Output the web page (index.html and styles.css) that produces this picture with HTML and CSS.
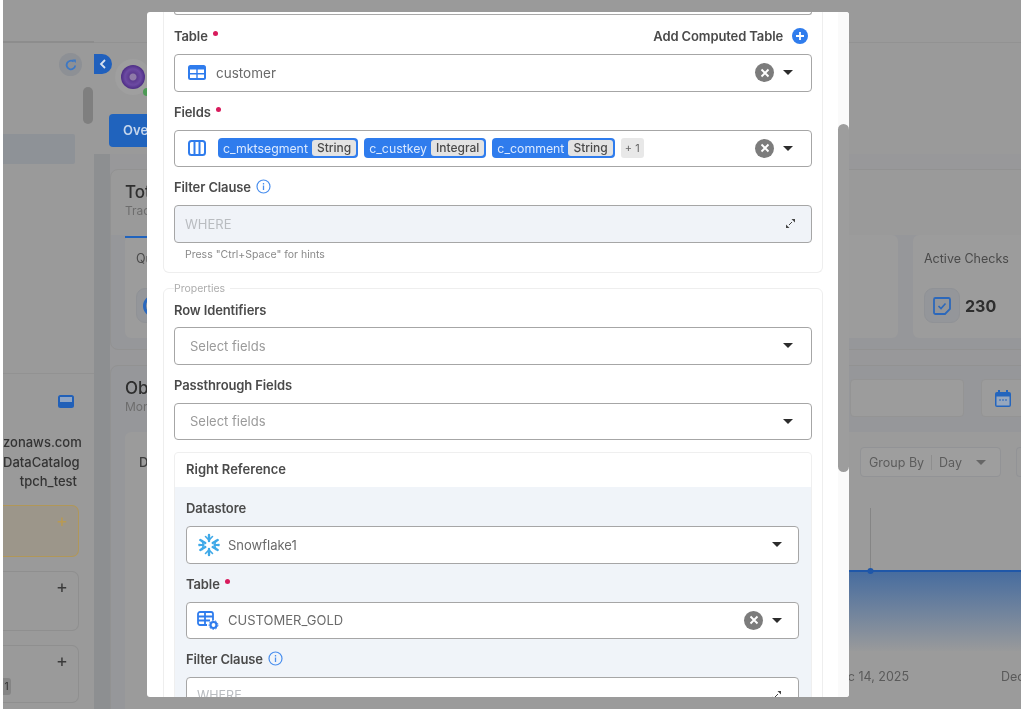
FILE: index.html
```html
<!DOCTYPE html>
<html lang="en">
<head>
<meta charset="utf-8">
<title>Add check</title>
<link rel="stylesheet" href="styles.css">
</head>
<body>
<div class="stage">
  <aside class="side">
    <div class="side-top"></div>
    <div class="side-tools">
      <span class="refresh"><svg width="14" height="14" viewBox="0 0 14 14"><path d="M11.2 7.5A4.3 4.3 0 1 1 9.6 3.6" fill="none" stroke="#3d78c4" stroke-width="1.8"/><path d="M8.2 1.5h3.6v3.6z" fill="#3d78c4"/></svg></span>
    </div>
    <div class="side-scroll"></div>
    <div class="side-sel"></div>
    <div class="side-info">
      <svg class="side-ico" width="16" height="14" viewBox="0 0 16 14"><rect width="16" height="13" rx="2.500" fill="#2160b8"/><rect x="2" y="2" width="12" height="5" fill="#8fa5c4"/></svg>
      <p>zonaws.com</p>
      <p>DataCatalog</p>
      <p>tpch_test</p>
    </div>
    <div class="side-card amber"><span>+</span></div>
    <div class="side-card tall"><span>+</span></div>
    <div class="side-card last"><span>+</span><b>1</b></div>
  </aside>

  <main class="main">
    <button class="collapse"><svg width="8" height="10" viewBox="0 0 8 10"><path d="M6 1L2 5l4 4" fill="none" stroke="#d8e2f0" stroke-width="1.800"/></svg></button>
    <header class="head">
      <div class="head-top"></div>
      <div class="avatar-row"><span class="avatar"><span class="avatar-in"></span><i class="online"></i></span></div>
      <div class="tab-row"><span class="tab-main">Overview</span></div>
    </header>

    <section class="panel totals">
      <h2>Totals</h2>
      <p class="sub">Tracking</p>
      <div class="underline"></div>
      <div class="stats">
        <div class="stat low"><p>Quality</p><span class="stat-ico ring"><i class="ring-in"></i></span></div>
        <div class="stat"></div>
        <div class="stat"></div>
        <div class="stat"></div>
        <div class="stat">
          <p>Active Checks</p>
          <div class="stat-val"><span class="stat-ico"><svg width="20" height="20" viewBox="0 0 20 20"><path d="M3.500 2h13a1.500 1.500 0 0 1 1.500 1.500V13l-5 5H3.500A1.500 1.500 0 0 1 2 16.500v-13A1.500 1.500 0 0 1 3.500 2z" fill="none" stroke="#2c68bb" stroke-width="1.800"/><path d="M6.500 10l2.500 2.500 4.500-5" fill="none" stroke="#2c68bb" stroke-width="1.600"/></svg></span><strong>230</strong></div>
        </div>
      </div>
    </section>

    <section class="panel observe">
      <div class="obs-head">
        <div class="obs-title"><h2>Obs</h2><p class="sub">Monitor</p></div>
        <div class="date-box"></div>
        <div class="cal-box"><svg width="18" height="19" viewBox="0 0 18 19"><rect x="1" y="3" width="16" height="15" rx="2" fill="#2465bd"/><rect x="2.500" y="7.500" width="13" height="9" fill="#97a7bd"/><rect x="4" y="1" width="2" height="4" fill="#2465bd"/><rect x="12" y="1" width="2" height="4" fill="#2465bd"/><path d="M5 11h2M8 11h2M11 11h2" stroke="#2465bd" stroke-width="1.200"/></svg></div>
      </div>
      <div class="chart-card">
        <div class="chart-head">
          <span class="chart-name">Data</span>
          <div class="group-by"><span class="gb-label">Group By</span><span class="gb-val">Day</span><i class="caret muted"></i></div>
          <div class="group-next"></div>
        </div>
        <svg class="chart" width="896" height="160" viewBox="0 0 896 160">
          <defs><linearGradient id="fade" x1="0" y1="0" x2="0" y2="1"><stop offset="0" stop-color="#466c9f"/><stop offset="1" stop-color="#999a9b"/></linearGradient></defs>
          <rect x="100" y="71" width="796" height="80" fill="url(#fade)"/>
          <line x1="745.500" y1="8" x2="745.500" y2="71" stroke="#858585"/>
          <line x1="100" y1="71" x2="896" y2="71" stroke="#1f57a8" stroke-width="2"/>
          <circle cx="745.500" cy="71" r="3" fill="#1f57a8"/>
        </svg>
        <div class="chart-axis"><span>Dec 14, 2025</span><span>Dec</span></div>
      </div>
    </section>
  </main>

  <div class="modal">
    <div class="modal-body">
      <div class="card first">
        <div class="tail"></div>
        <div class="label-row"><label>Table <i class="req"></i></label><span class="add">Add Computed Table <svg width="16" height="16" viewBox="0 0 16 16"><circle cx="8" cy="8" r="8" fill="#2f7ced"/><path d="M8 4v8M4 8h8" stroke="#fff" stroke-width="1.800"/></svg></span></div>
        <div class="field">
          <svg class="f-ico" width="18" height="16" viewBox="0 0 18 16"><rect width="18" height="15" rx="2.500" fill="#2f7ced"/><path d="M2 4.500h6.300v3.500H2zM9.700 4.500H16v3.500H9.700zM2 9.500h6.300V13H2zM9.700 9.500H16V13H9.700z" fill="#fff"/></svg>
          <span class="val">customer</span>
          <span class="clear"><svg width="10" height="10" viewBox="0 0 10 10"><path d="M1.500 1.500l7 7M8.500 1.500l-7 7" stroke="#fff" stroke-width="1.900"/></svg></span><i class="caret"></i>
        </div>
        <label class="lbl-gap">Fields <i class="req"></i></label>
        <div class="field">
          <svg class="f-ico" width="18" height="16" viewBox="0 0 18 16"><rect x="1" y="1" width="16" height="14" rx="2.500" fill="none" stroke="#2f7ced" stroke-width="2"/><path d="M6.500 1v14M11.500 1v14" stroke="#2f7ced" stroke-width="2"/></svg>
          <span class="chips">
            <span class="chip"><span>c_mktsegment</span><b>String</b></span>
            <span class="chip"><span>c_custkey</span><b>Integral</b></span>
            <span class="chip"><span>c_comment</span><b>String</b></span>
            <span class="more">+ 1</span>
          </span>
          <span class="clear"><svg width="10" height="10" viewBox="0 0 10 10"><path d="M1.500 1.500l7 7M8.500 1.500l-7 7" stroke="#fff" stroke-width="1.900"/></svg></span><i class="caret"></i>
        </div>
        <label class="lbl-gap">Filter Clause <svg class="info" width="15" height="15" viewBox="0 0 15 15"><circle cx="7.500" cy="7.500" r="6.500" fill="none" stroke="#4a8fee" stroke-width="1.200"/><path d="M7.500 6.500v4.500M7.500 4v1.500" stroke="#4a8fee" stroke-width="1.300"/></svg></label>
        <div class="field code">
          <span class="ph">WHERE</span>
          <svg width="11" height="11" viewBox="0 0 11 11"><path d="M6.500 1H10v3.500zM4.500 10H1V6.500z" fill="#444"/><path d="M7 4L4 7" stroke="#444"/></svg>
        </div>
        <p class="hint">Press "Ctrl+Space" for hints</p>
      </div>

      <fieldset class="card props">
        <legend>Properties</legend>
        <label class="lbl-top">Row Identifiers</label>
        <div class="field"><span class="sel">Select fields</span><i class="caret"></i></div>
        <label class="lbl-gap">Passthrough Fields</label>
        <div class="field"><span class="sel">Select fields</span><i class="caret"></i></div>
        <div class="ref">
          <h3>Right Reference</h3>
          <div class="ref-body">
            <label>Datastore</label>
            <div class="field">
              <svg class="flake" width="24" height="24" viewBox="0 0 24 24" fill="none" stroke="#3fa9e8" stroke-width="2.400" stroke-linecap="round"><path d="M12 2v6M12 16v6M3.300 7l5 3M15.700 14l5 3M3.300 17l5-3M15.700 10l5-3"/><path d="M8.500 3.500L12 7l3.500-3.500M8.500 20.500L12 17l3.500 3.500M2 11.500l4.500 .5L5 7.500M22 11.500l-4.500 .5L19 7.500M2 12.500l4.500-.5L5 16.500M22 12.500l-4.500-.5L19 16.500" stroke-width="1.600"/></svg>
              <span class="val small">Snowflake1</span>
              <i class="caret"></i>
            </div>
            <label class="lbl-gap">Table <i class="req"></i></label>
            <div class="field">
              <svg class="f-ico" width="22" height="19" viewBox="0 0 22 19"><path d="M10 14H3a2 2 0 0 1-2-2V3a2 2 0 0 1 2-2h11a2 2 0 0 1 2 2v6" fill="none" stroke="#2f7ced" stroke-width="1.800"/><path d="M1 5.500h15M1 9.500h12M8 1v13" stroke="#2f7ced" stroke-width="1.800"/><circle cx="16.500" cy="14" r="3" fill="none" stroke="#2f7ced" stroke-width="2.200"/><circle cx="16.500" cy="14" r="4.400" fill="none" stroke="#2f7ced" stroke-width="1" stroke-dasharray="1.600 1.500"/></svg>
              <span class="val small">CUSTOMER_GOLD</span>
              <span class="clear"><svg width="10" height="10" viewBox="0 0 10 10"><path d="M1.500 1.500l7 7M8.500 1.500l-7 7" stroke="#fff" stroke-width="1.900"/></svg></span><i class="caret"></i>
            </div>
            <label class="lbl-gap">Filter Clause <svg class="info" width="15" height="15" viewBox="0 0 15 15"><circle cx="7.500" cy="7.500" r="6.500" fill="none" stroke="#4a8fee" stroke-width="1.200"/><path d="M7.500 6.500v4.500M7.500 4v1.500" stroke="#4a8fee" stroke-width="1.300"/></svg></label>
            <div class="field last-field">
              <span class="ph">WHERE</span>
              <svg width="11" height="11" viewBox="0 0 11 11"><path d="M6.500 1H10v3.500zM4.500 10H1V6.500z" fill="#444"/><path d="M7 4L4 7" stroke="#444"/></svg>
            </div>
          </div>
        </div>
      </fieldset>
    </div>
    <div class="modal-scroll"><div class="modal-thumb"></div></div>
  </div>
</div>
</body>
</html>
```

FILE: styles.css
```css
* { box-sizing: border-box; }
html, body { margin: 0; height: 100%; background: #fff; overflow: hidden; }
body { font-family: Inter, "Liberation Sans", sans-serif; color: #3c3c3c; }
p, h2, h3 { margin: 0; }

.stage {
  position: relative;
  width: 1018px;
  height: 709px;
  margin-left: 3px;
  display: flex;
  overflow: hidden;
  background: #9a9a9a;
  filter: blur(0.6px);
}

/* sidebar */
.side { width: 91px; flex: none; background: #9a9a9a; }
.side-top { height: 43px; border-bottom: 2px solid #8d8d8d; }
.side-tools { display: flex; justify-content: flex-end; padding: 10px 12px 0 0; }
.refresh { width: 23px; height: 23px; border-radius: 50%; background: #8d9095; display: flex; align-items: center; justify-content: center; }
.side-scroll { width: 10px; height: 37px; margin: 11px 0 0 80px; border-radius: 5px; background: #7f7f7f; }
.side-sel { width: 72px; height: 30px; margin-top: 10px; background: #8e9297; border-radius: 0 2px 2px 0; }
.side-info { margin-top: 209px; border-top: 1px solid #929292; padding: 21px 17px 0 0; text-align: right; height: 133px; font-size: 13px; line-height: 19.500px; font-weight: 500; color: #333; white-space: nowrap; overflow: hidden; }
.side-ico { display: block; margin: 0 3px 24px auto; }
.side-card { width: 76px; border: 1px solid #8f8f8f; border-left: 0; border-radius: 0 7px 7px 0; text-align: right; padding-right: 10px; font-size: 18px; line-height: 20px; color: #3a3a3a; }
.side-card span { display: block; padding-top: 5px; }
.side-card.amber { height: 52px; margin-top: -1px; border-color: #b19758; background: #9c968a; color: #b99a52; }
.side-card.tall { height: 60px; margin-top: 14px; }
.side-card.last { height: 58px; margin-top: 14px; }
.side-card b { display: block; width: 9px; height: 17px; margin-top: 7px; margin-left: -1px; background: #858585; border-radius: 0 3px 3px 0; font-size: 10px; line-height: 17px; font-weight: 500; text-align: center; }

/* main */
.main { position: relative; flex: 1; min-width: 0; background: linear-gradient(90deg, #8d8f91 16px, #98989a 16px); }
.collapse { position: absolute; left: 0; top: 54px; width: 18px; height: 20px; border: 0; padding: 0; border-radius: 0 10px 10px 0; background: #2060bd; display: flex; align-items: center; justify-content: center; }
.head { height: 154px; background: #9a9a9a; }
.head-top { height: 43px; border-bottom: 1px solid #929292; }
.avatar-row { height: 71px; padding: 16px 0 0 21px; }
.avatar { position: relative; display: block; width: 36px; height: 36px; border-radius: 50%; background: #9f9f9f; padding: 6px; }
.avatar-in { display: block; width: 24px; height: 24px; border-radius: 50%; background: radial-gradient(circle at 50% 50%, #8f7aa8 0 3px, #5c3a90 4px, #6c4aa2 8px, #4d2d85 12px); }
.online { position: absolute; right: 0; bottom: -1px; width: 8px; height: 8px; border-radius: 50%; background: #4d9a55; }
.tab-row { padding-left: 15px; }
.tab-main { display: block; width: 110px; height: 33px; border-radius: 4px; background: #2063bd; color: #c6d6ec; font-size: 13px; font-weight: 600; line-height: 33px; padding-left: 14px; }

.panel { width: 940px; margin-left: 16px; background: #9a9a9a; border: 1px solid #929292; border-radius: 8px; }
.panel h2 { font-size: 17px; line-height: 22px; font-weight: 500; color: #2e2e2e; }
.panel .sub { font-size: 12px; line-height: 15px; color: #6d6d6d; }
.totals { height: 181px; margin-top: 15px; padding: 11px 14px 0; background: linear-gradient(180deg, #9a9a9a 65px, #96979a 65px); }
.underline { position: relative; z-index: 1; width: 60px; height: 2px; margin-top: 18px; background: #2063bd; }
.stats { display: flex; gap: 15px; margin-top: -3px; }
.stat { width: 182px; flex: none; height: 103px; background: #9c9c9c; border-radius: 6px; padding: 15px 11px; font-size: 12.500px; color: #4a4a4a; }
.stat p { line-height: 18px; }
.stat-val { display: flex; align-items: center; gap: 5px; margin-top: 20px; }
.stat-val strong { font-size: 16px; font-weight: 700; color: #2e2e2e; }
.stat-ico { width: 36px; height: 35px; flex: none; display: flex; align-items: center; justify-content: center; border: 1px solid #909296; border-radius: 9px; background: #94969a; }
.stat-ico.ring { margin-top: 20px; }
.ring-in { display: block; width: 22px; height: 22px; border: 3px solid #2a68bd; border-radius: 50%; }

.observe { margin-top: 15px; height: 360px; padding: 11px 14px 0; background: #96979a; }
.obs-head { display: flex; gap: 17px; height: 55px; }
.obs-title { margin-right: auto; }
.date-box { width: 114px; height: 38px; margin-top: 2px; background: #9c9c9c; border: 1px solid #949494; border-radius: 4px; }
.cal-box { width: 68px; height: 38px; margin-top: 2px; margin-right: -14px; background: #9c9c9c; border: 1px solid #949494; border-radius: 4px; display: flex; align-items: center; padding-left: 12px; }
.chart-card { width: 911px; height: 290px; background: #9b9b9b; border-radius: 6px 0 0 0; padding-top: 15px; }
.chart-head { display: flex; align-items: center; height: 30px; padding-left: 14px; }
.chart-name { font-size: 13px; font-weight: 500; margin-right: auto; }
.group-by { display: flex; align-items: center; width: 141px; height: 30px; padding: 1px 0 0 8px; background: #9e9e9e; border: 1px solid #929396; border-radius: 4px; font-size: 12.500px; color: #5c5c5c; }
.gb-label { padding-right: 7px; border-right: 1px solid #8e8e8e; }
.gb-val { padding-left: 7px; flex: 1; }
.caret { display: block; flex: none; width: 0; height: 0; border-left: 5px solid transparent; border-right: 5px solid transparent; border-top: 5px solid #2c2c2c; }
.caret.muted { border-top-color: #666; margin-right: 14px; }
.group-next { width: 20px; height: 30px; margin-left: 15px; border: 1px solid #929396; border-right: 0; border-radius: 4px 0 0 4px; flex: none; }
.chart { display: block; margin-top: 23px; }
.chart-axis { display: flex; justify-content: flex-end; margin-top: 8px; padding-right: 15px; font-size: 12.500px; line-height: 18px; color: #5a5a5a; }
.chart-axis span:first-child { margin-right: 92px; }
.chart-axis span:last-child { width: 20px; overflow: hidden; }

/* modal */
.modal {
  position: absolute;
  z-index: 2;
  left: 144px;
  top: 12px;
  width: 702px;
  height: 685px;
  display: flex;
  overflow: hidden;
  background: #fff;
  border-radius: 3px;
}
.modal-body { width: 691px; flex: none; padding: 0 15px 0 16px; overflow: hidden; }
.modal-scroll { width: 11px; flex: none; background: #fafafa; padding-top: 112px; }
.modal-thumb { height: 348px; border-radius: 6px; background: #9d9d9d; }

.card { border: 1px solid #eeeeee; border-radius: 6px; padding: 0 10px; margin: 0; }
.card.first { height: 261px; border-top: 0; border-radius: 0 0 6px 6px; }
.tail { height: 3px; border: 1px solid #a8a8a8; border-top: 0; border-radius: 0 0 4px 4px; }

label { display: block; font-size: 13px; line-height: 18px; font-weight: 600; letter-spacing: -0.12px; color: #4a4a4a; }
.label-row { display: flex; justify-content: space-between; align-items: center; padding: 12px 0 9px; height: 39px; }
.req { display: inline-block; width: 5px; height: 5px; margin-left: 2px; border-radius: 50%; background: #d81b5c; vertical-align: 5px; }
.add { display: flex; align-items: center; gap: 9px; padding-right: 4px; font-size: 13px; font-weight: 600; letter-spacing: -0.12px; color: #4a4a4a; }
.lbl-gap { margin-top: 11px; margin-bottom: 9px; }
.lbl-top { margin-top: 6px; margin-bottom: 8px; }

.field { display: flex; align-items: center; height: 37.500px; padding: 0 18px 0 13px; background: #fff; border: 1px solid #a6a6a6; border-radius: 4px; font-size: 13px; }
.f-ico { flex: none; margin-right: 10px; }
.val { flex: 1; color: #6a6a6a; font-size: 13.500px; }
.val.small { font-size: 13px; }
.sel { flex: 1; padding-left: 2px; color: #9a9a9a; }
.clear { flex: none; width: 19px; height: 19px; margin-right: 9px; border-radius: 50%; background: #7c7c7c; display: flex; align-items: center; justify-content: center; }
.info { vertical-align: -2px; margin-left: 2px; }

.chips { flex: 1; display: flex; align-items: center; gap: 6px; margin-left: 2px; }
.chip { display: flex; align-items: center; height: 20px; padding: 0 2px 0 5px; gap: 4px; background: #2f7ced; border-radius: 4px; color: #dbe9ff; font-size: 12.300px; white-space: nowrap; }
.chip b { height: 16px; padding: 0 5px; font-weight: 500; font-size: 12px; line-height: 16px; background: #e3e3e3; color: #4a4a4a; border-radius: 3px; }
.more { width: 23px; height: 20px; background: #e8e8e8; border-radius: 3px; font-size: 11px; line-height: 20px; text-align: center; color: #666; }

.code { background: #f0f3f8; padding: 0 15px 0 10px; justify-content: space-between; }
.ph { color: #b9bcc0; font-size: 13px; }
.hint { margin: 5px 0 0 11px; font-size: 10.500px; line-height: 14px; color: #8a8a8a; }

.props { margin-top: 9px; min-width: 0; height: 500px; }
.props legend { padding: 0 5px 0 0; font-size: 10.500px; line-height: 13px; color: #adadad; }
.ref { margin-top: 12px; border: 1px solid #efefef; border-radius: 4px 4px 0 0; }
.ref h3 { height: 34px; padding-left: 11px; font-size: 13px; line-height: 33px; font-weight: 600; color: #4a4a4a; }
.ref-body { background: #f0f4f9; padding: 12px 12px 0 11px; }
.ref-body > label:first-child { margin-bottom: 9px; }
.ref-body .field { padding: 0 16px 0 10px; }
.ref-body .f-ico { margin-right: 9px; }
.flake { flex: none; margin-right: 7px; }
.last-field { justify-content: space-between; }
.last-field .ph { font-size: 12.500px; }
```
